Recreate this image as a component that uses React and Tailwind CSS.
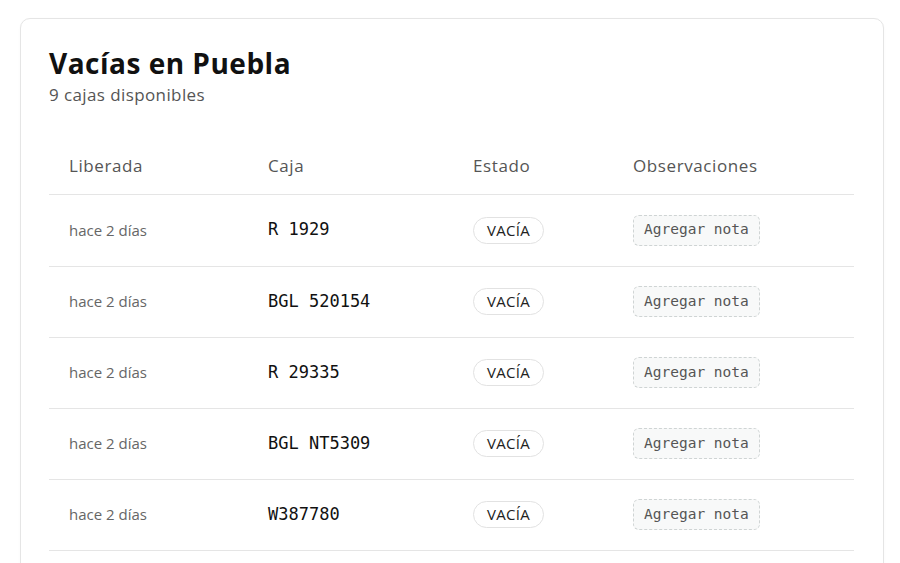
import React from "react";

const rows = [
  { when: "hace 2 días", caja: "R 1929" },
  { when: "hace 2 días", caja: "BGL 520154" },
  { when: "hace 2 días", caja: "R 29335" },
  { when: "hace 2 días", caja: "BGL NT5309" },
  { when: "hace 2 días", caja: "W387780" },
];

export default function App() {
  return (
    <div className="w-[900px] h-[563px] overflow-hidden bg-white font-['Open_Sans',sans-serif]">
      <div className="ml-[20px] mt-[18px] w-[864px] rounded-[10px] border border-[#e5e5e5] bg-white pl-[28px] pr-[29px] pt-[26px] pb-[40px] shadow-[0_1px_3px_rgba(0,0,0,0.03)]">
        <h1 className="text-[28px] font-bold leading-[36px] tracking-[0.5px] text-[#111]">Vacías en Puebla</h1>
        <p className="mt-[3px] text-[17px] leading-[22px] tracking-[0.4px] text-[#555]">9 cajas disponibles</p>
        <table className="mt-[32px] w-full border-collapse">
          <thead>
            <tr className="border-b border-[#e5e5e5]">
              <th className="w-[199px] h-[56px] pl-[20px] text-left text-[17px] font-medium tracking-[0.6px] text-[#555]">Liberada</th>
              <th className="w-[205px] pl-[20px] text-left text-[17px] font-medium tracking-[0.6px] text-[#555]">Caja</th>
              <th className="w-[160px] pl-[20px] text-left text-[17px] font-medium tracking-[0.6px] text-[#555]">Estado</th>
              <th className="pl-[20px] text-left text-[17px] font-medium tracking-[0.6px] text-[#555]">Observaciones</th>
            </tr>
          </thead>
          <tbody>
            {rows.map((r, i) => (
              <tr key={i} className="border-b border-[#e5e5e5]">
                <td className={(i === 0 ? "h-[72px]" : "h-[71px]") + " pl-[20px] text-[15px] text-[#666]"}>{r.when}</td>
                <td className="pl-[20px] font-['DejaVu_Sans_Mono',monospace] text-[17px] text-[#111]">{r.caja}</td>
                <td className="pl-[20px]">
                  <span className="inline-flex h-[27px] items-center rounded-full border border-[#e2e2e2] px-[13px] text-[15px] tracking-[0.3px] text-[#222]">VACÍA</span>
                </td>
                <td className="pl-[20px]">
                  <span className="inline-flex h-[31px] items-center rounded-[6px] border border-dashed border-[#cfd4d4] bg-[#f8f9f9] px-[10px] font-['DejaVu_Sans_Mono',monospace] text-[14.5px] text-[#555]">Agregar nota</span>
                </td>
              </tr>
            ))}
          </tbody>
        </table>
      </div>
    </div>
  );
}
